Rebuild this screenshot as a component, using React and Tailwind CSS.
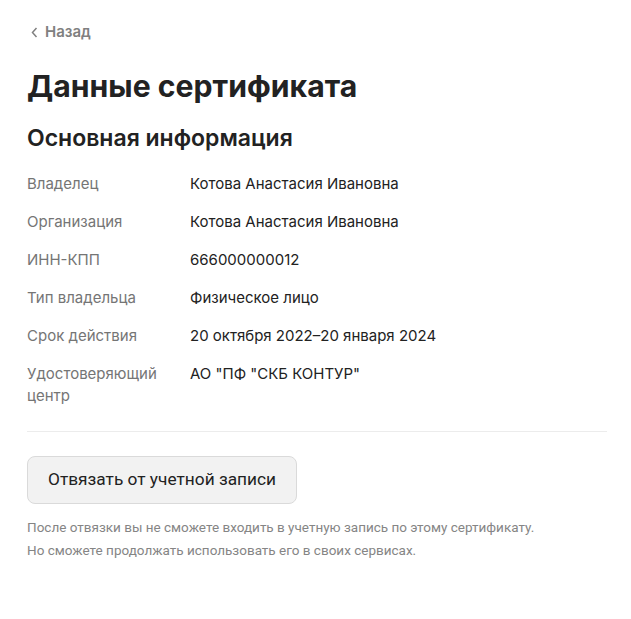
const rows = [
  { label: "Владелец", value: "Котова Анастасия Ивановна" },
  { label: "Организация", value: "Котова Анастасия Ивановна" },
  { label: "ИНН-КПП", value: "666000000012" },
  { label: "Тип владельца", value: "Физическое лицо" },
  { label: "Срок действия", value: "20 октября 2022–20 января 2024" },
  { label: "Удостоверяющий центр", value: 'АО "ПФ "СКБ КОНТУР"' },
];

const App = () => {
  return (
    <div className="min-h-[619px] bg-white px-[27px] pt-[22px] font-['Inter',sans-serif] text-[#222]">
      <a className="flex items-center gap-[7px] text-[15px] leading-5 font-semibold text-[#808080]">
        <svg width="7" height="11" viewBox="0 0 7 11" fill="none" className="ml-[4px]">
          <path d="M5.5 1 1.5 5.5l4 4.5" stroke="#808080" strokeWidth="1.5" />
        </svg>
        Назад
      </a>

      <h1 className="mt-[24px] text-[30.2px] leading-10 font-bold text-[#222]">
        Данные сертификата
      </h1>

      <h2 className="mt-[18px] text-[23px] leading-7 font-semibold text-[#222]">
        Основная информация
      </h2>

      <div className="mt-[21px] flex flex-col gap-4">
        {rows.map((row) => (
          <div key={row.label} className="flex text-[15px] leading-[22px]">
            <div className="w-[163px] pr-4 text-[#757575]">{row.label}</div>
            <div className="text-[#222]">{row.value}</div>
          </div>
        ))}
      </div>

      <div className="mt-[24px] h-px w-[580px] bg-[#ececec]" />

      <button className="mt-[24px] h-[48px] rounded-lg border border-[#dadada] bg-[#f2f2f2] px-[20px] font-['Roboto',sans-serif] text-[17.3px] text-[#222]">
        Отвязать от учетной записи
      </button>

      <div className="mt-[12px] font-['Roboto',sans-serif] text-[13.5px] leading-[23px] text-[#858585]">
        <p>После отвязки вы не сможете входить в учетную запись по этому сертификату.</p>
        <p>Но сможете продолжать использовать его в своих сервисах.</p>
      </div>
    </div>
  );
};

export default App;
